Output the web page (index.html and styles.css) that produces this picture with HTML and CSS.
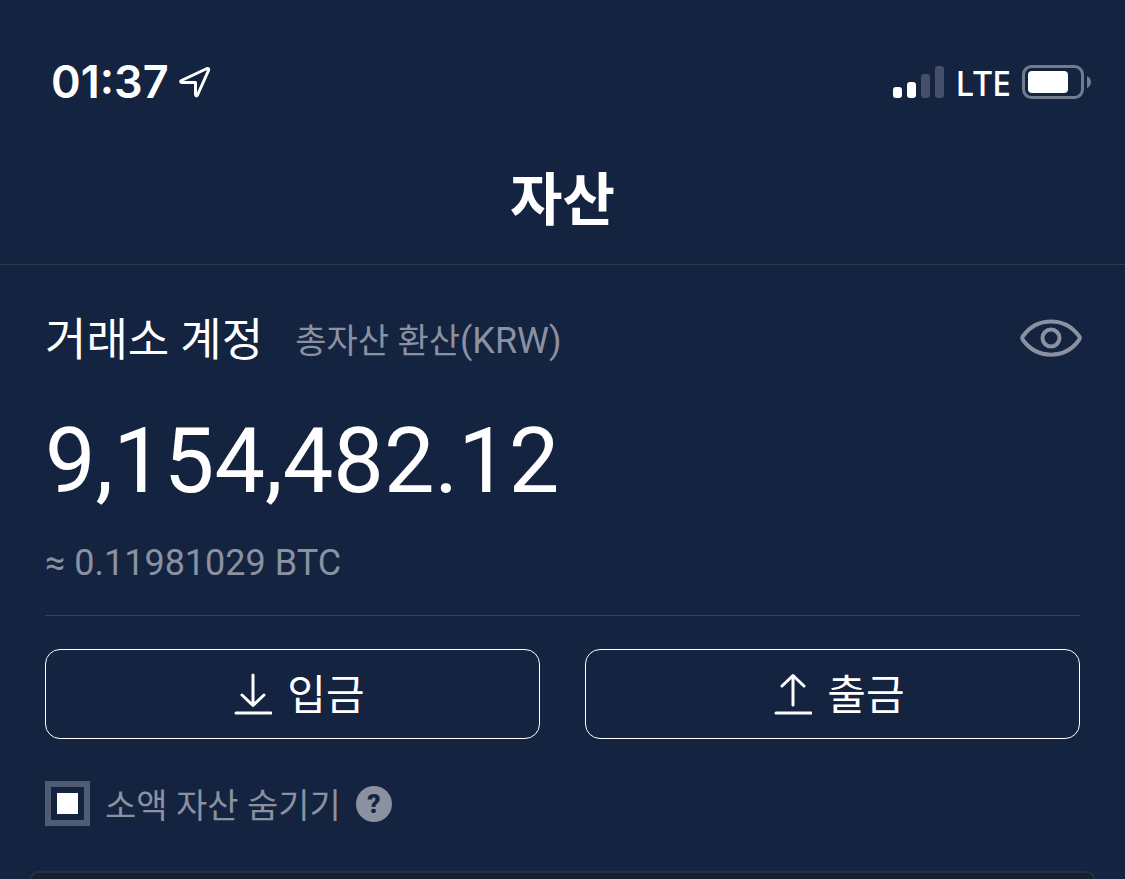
FILE: index.html
```html
<!DOCTYPE html>
<html lang="ko">
<head>
  <meta charset="UTF-8" />
  <meta name="viewport" content="width=device-width, initial-scale=1.0"/>
  <title>자산</title>
  <link rel="stylesheet" href="styles.css">
</head>
<body>
  <div class="status-bar">
    <div class="status-left">
      <span class="clock">01:37</span>
      <svg class="location" width="32" height="32" viewBox="0 0 32 32" aria-hidden="true">
        <path d="M2.500 14.500 L28 2.500 Q30 2 29.500 4.500 L18.500 29 Q17 31 16.500 28.500 L16.500 16.500 L3 16.500 Q0.500 15.700 2.500 14.500 Z" fill="none" stroke="#fff" stroke-width="3" stroke-linejoin="round"/>
      </svg>
    </div>
    <div class="status-right">
      <svg width="52" height="32" viewBox="0 0 52 32" aria-hidden="true">
        <rect x="1" y="21" width="9" height="11" rx="3" fill="#fff"/>
        <rect x="15" y="16" width="9" height="16" rx="3" fill="#fff"/>
        <rect x="29" y="8" width="9" height="24" rx="3" fill="#454f69"/>
        <rect x="43" y="0" width="9" height="32" rx="3" fill="#454f69"/>
      </svg>
      <span class="network">LTE</span>
      <svg width="70" height="34" viewBox="0 0 70 34" aria-hidden="true">
        <rect x="1.500" y="1.500" width="59" height="31" rx="8" fill="none" stroke="#737b8e" stroke-width="3"/>
        <rect x="6" y="6" width="40" height="22" rx="4" fill="#fff"/>
        <path d="M65 11 Q69 13 69 17 Q69 21 65 23 Z" fill="#737b8e"/>
      </svg>
    </div>
  </div>

  <header class="header">
    <h1>자산</h1>
  </header>

  <main>
    <section class="account">
      <div class="account-head">
        <h2>거래소 계정</h2>
        <span class="unit">총자산 환산<span class="currency">(KRW)</span></span>
        <button class="icon-button eye" type="button" aria-label="잔액 숨기기">
          <svg width="62" height="38" viewBox="0 0 62 38" aria-hidden="true">
            <path d="M3 17 C17 -2.500 45 -2.500 59 17 Q60.500 19 59 21 C45 40.500 17 40.500 3 21 Q1.500 19 3 17 Z" fill="none" stroke="#8a91a0" stroke-width="4"/>
            <circle cx="31" cy="19" r="8.500" fill="none" stroke="#8a91a0" stroke-width="4"/>
          </svg>
        </button>
      </div>
      <div class="balance">9,154,482.12</div>
      <div class="btc">≈ 0.11981029 BTC</div>
    </section>

    <div class="actions">
      <button class="action" type="button">
        <svg width="38" height="42" viewBox="0 0 38 42" aria-hidden="true">
          <path d="M19 2 V32 M8 22 L19 32.500 L30 22 M2 40 H37" fill="none" stroke="#fff" stroke-width="3" stroke-linecap="round" stroke-linejoin="round"/>
        </svg>
        <span>입금</span>
      </button>
      <button class="action" type="button">
        <svg width="38" height="42" viewBox="0 0 38 42" aria-hidden="true">
          <path d="M19 32 V3 M8 13 L19 2.500 L30 13 M2 40 H37" fill="none" stroke="#fff" stroke-width="3" stroke-linecap="round" stroke-linejoin="round"/>
        </svg>
        <span>출금</span>
      </button>
    </div>

    <div class="filter">
      <input type="checkbox" id="hideSmall" checked>
      <label for="hideSmall">소액 자산 숨기기</label>
      <button class="icon-button help" type="button" aria-label="도움말">?</button>
    </div>

    <div class="asset-card"></div>
  </main>
</body>
</html>
```
FILE: styles.css
```css
* {
  box-sizing: border-box;
}
body {
  margin: 0;
  min-height: 100vh;
  display: flex;
  flex-direction: column;
  font-family: Roboto, "Noto Sans CJK KR", sans-serif;
  color: #fff;
  background-color: #142340;
}
h1, h2 {
  margin: 0;
}
button {
  font-family: inherit;
  color: inherit;
  background: none;
  cursor: pointer;
}
svg {
  display: block;
}
.status-bar {
  display: flex;
  justify-content: space-between;
  align-items: center;
  padding: 52px 33px 0 51px;
  height: 112px;
}
.status-left {
  display: flex;
  align-items: center;
  gap: 10px;
}
.clock {
  font: 600 45px/60px Inter, sans-serif;
}
.status-right {
  display: flex;
  align-items: center;
  gap: 11px;
}
.network {
  padding-top: 2px;
  font: 500 34px/60px "Noto Sans", sans-serif;
}
.header {
  height: 153px;
  padding-top: 49px;
  text-align: center;
  border-bottom: 1px solid #2e3b55;
}
h1 {
  font-size: 57px;
  line-height: 80px;
  font-weight: 700;
}
main {
  flex: 1;
  display: flex;
  flex-direction: column;
}
.account {
  margin: 0 45px;
  padding: 46px 0 30px;
  border-bottom: 1px solid #35415a;
}
.account-head {
  display: flex;
  align-items: center;
}
h2 {
  font-size: 45px;
  line-height: 60px;
  font-weight: 400;
}
.unit {
  margin-left: 32px;
  font-size: 34px;
  line-height: 60px;
  color: #8a91a0;
}
.currency {
  font-size: 36px;
}
.icon-button {
  padding: 0;
  border: 0;
}
.eye {
  margin: 0 -2px 6px auto;
}
.balance {
  margin-top: 39px;
  font-size: 90px;
  line-height: 104px;
}
.btc {
  margin-top: 27px;
  font-size: 36px;
  line-height: 44px;
  color: #8a91a0;
}
.actions {
  display: grid;
  grid-template-columns: 1fr 1fr;
  gap: 45px;
  padding: 33px 45px 0;
}
.action {
  display: flex;
  align-items: center;
  justify-content: center;
  gap: 15px;
  height: 90px;
  padding: 0 0 0 14px;
  border: 1px solid #fff;
  border-radius: 15px;
  font-size: 42px;
}
.action span {
  padding-bottom: 6px;
}
.filter {
  display: flex;
  align-items: center;
  padding: 42px 45px 0;
  font-size: 34px;
  line-height: 40px;
  color: #8a91a0;
}
.filter input {
  appearance: none;
  width: 45px;
  height: 45px;
  margin: 0 15px 0 0;
  border: 6px solid #505c73;
}
.filter input:checked {
  padding: 6px;
  background: #fff content-box;
}
.filter label {
  padding-top: 5px;
}
.help {
  width: 36px;
  height: 36px;
  margin-left: 15px;
  border-radius: 50%;
  background-color: #8a91a0;
  color: #142340;
  font-size: 26px;
  line-height: 36px;
  font-weight: 900;
}
.asset-card {
  flex: 1;
  margin: 45px 30px 0;
  border: 2px solid #232f42;
  border-bottom: 0;
  border-radius: 15px 15px 0 0;
  background-color: #17202f;
}
```
